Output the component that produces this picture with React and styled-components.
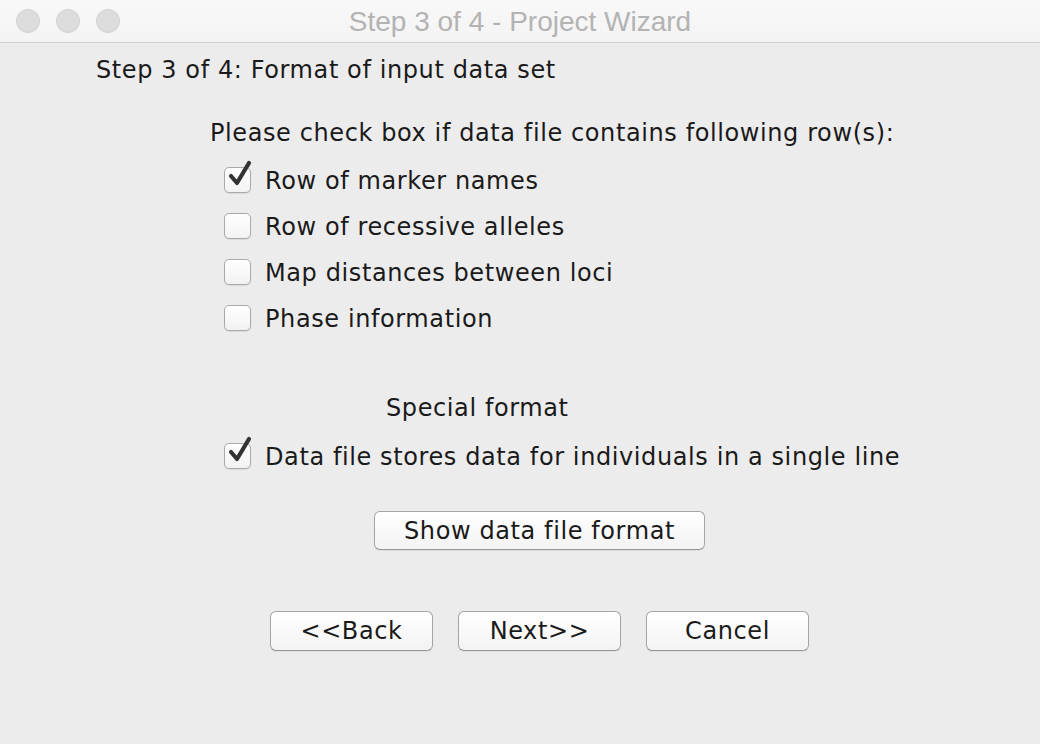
import React, { useState } from "react"
import styled, { createGlobalStyle } from "styled-components"

const GlobalStyle = createGlobalStyle`
  html, body {
    margin: 0;
    padding: 0;
    background: #ececec;
  }
  * { box-sizing: border-box; }
`

const Window = styled.div`
  width: 1040px;
  height: 744px;
  background: #ececec;
  display: flex;
  flex-direction: column;
  font-family: "DejaVu Sans", "Noto Sans", sans-serif;
  font-size: 24px;
  letter-spacing: 0.6px;
  color: #1a1a1a;
  overflow: hidden;
`

const TitleBar = styled.div`
  height: 43px;
  flex-shrink: 0;
  background: linear-gradient(#f8f8f8, #f4f4f4);
  border-bottom: 1px solid #cfcfcf;
  display: flex;
  align-items: center;
  position: relative;
  padding-left: 16px;
  gap: 16px;
`

const Light = styled.span`
  width: 24px;
  height: 24px;
  border-radius: 50%;
  background: #dcdcdc;
  border: 1px solid #d2d2d2;
`

const WindowTitle = styled.div`
  position: absolute;
  left: 0;
  right: 0;
  top: 1px;
  bottom: 0;
  display: flex;
  align-items: center;
  justify-content: center;
  font-family: "Liberation Sans", Arial, sans-serif;
  font-size: 28px;
  letter-spacing: 0;
  color: #b3b3b3;
  pointer-events: none;
`

const Content = styled.div`
  display: flex;
  flex-direction: column;
  align-items: flex-start;
`

const Label = styled.div`
  line-height: 26px;
  white-space: nowrap;
  margin-left: ${(p) => p.$left}px;
  margin-top: ${(p) => p.$top}px;
`

const Options = styled.div`
  display: flex;
  flex-direction: column;
  margin-left: 224px;
  margin-top: ${(p) => p.$top}px;
`

const Row = styled.label`
  height: 46px;
  display: flex;
  align-items: center;
  gap: 14px;
  white-space: nowrap;
  cursor: default;
`

const Text = styled.span`
  padding-top: 2px;
`

const Box = styled.span`
  position: relative;
  width: 27px;
  height: 26px;
  flex-shrink: 0;
  border-radius: 5px;
  border: 1px solid #a9a9a9;
  background: linear-gradient(#ffffff, #f2f2f2);
  box-shadow: 0 1px 1px rgba(0, 0, 0, 0.08);
`

const Check = styled.svg`
  position: absolute;
  left: 2px;
  top: -8px;
`

const PushButton = styled.button`
  width: ${(p) => p.$width}px;
  height: ${(p) => p.$height}px;
  border-radius: 6px;
  border: 1px solid #a4a4a4;
  border-bottom-color: #969696;
  background: linear-gradient(#ffffff, #f3f3f3);
  box-shadow: 0 1px 1px rgba(0, 0, 0, 0.06);
  font-family: "DejaVu Sans", "Noto Sans", sans-serif;
  font-size: 24px;
  letter-spacing: 0.6px;
  color: #1a1a1a;
  padding: 0;
  line-height: 1;
`

const ButtonRow = styled.div`
  display: flex;
  gap: 25px;
  margin-left: 270px;
  margin-top: 61px;
`

const Checkbox = ({ checked, onToggle, children }) => (
  <Row onClick={onToggle}>
    <Box>
      {checked && (
        <Check width="26" height="28" viewBox="0 0 26 28">
          <path d="M4 16 L10 23 L22 3" fill="none" stroke="#333" strokeWidth="4.2" strokeLinecap="round" strokeLinejoin="round" />
        </Check>
      )}
    </Box>
    <Text>{children}</Text>
  </Row>
)

export default function App() {
  const [rows, setRows] = useState([true, false, false, false])
  const [single, setSingle] = useState(true)
  const labels = ["Row of marker names", "Row of recessive alleles", "Map distances between loci", "Phase information"]

  return (
    <Window>
      <GlobalStyle />
      <TitleBar>
        <Light />
        <Light />
        <Light />
        <WindowTitle>Step 3 of 4 - Project Wizard</WindowTitle>
      </TitleBar>
      <Content>
        <Label $left={96} $top={14}>Step 3 of 4: Format of input data set</Label>
        <Label $left={210} $top={37}>Please check box if data file contains following row(s):</Label>
        <Options $top={11}>
          {labels.map((l, i) => (
            <Checkbox key={l} checked={rows[i]} onToggle={() => setRows(rows.map((v, j) => (j === i ? !v : v)))}>
              {l}
            </Checkbox>
          ))}
        </Options>
        <Label $left={386} $top={54}>Special format</Label>
        <Options $top={12}>
          <Checkbox checked={single} onToggle={() => setSingle(!single)}>
            Data file stores data for individuals in a single line
          </Checkbox>
        </Options>
        <Label $left={374} $top={32}>
          <PushButton $width={331} $height={39}>Show data file format</PushButton>
        </Label>
        <ButtonRow>
          <PushButton $width={163} $height={40}>&lt;&lt;Back</PushButton>
          <PushButton $width={163} $height={40}>Next&gt;&gt;</PushButton>
          <PushButton $width={163} $height={40}>Cancel</PushButton>
        </ButtonRow>
      </Content>
    </Window>
  )
}
